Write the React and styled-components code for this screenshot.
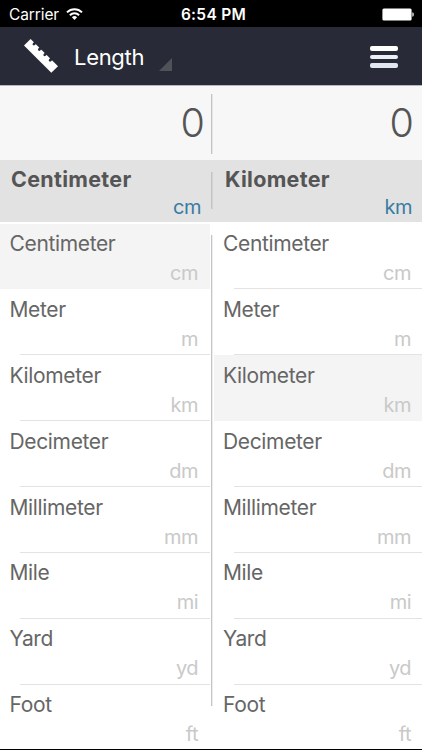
import React from 'react'
import styled, { createGlobalStyle } from 'styled-components'

const units = [
    { name: 'Centimeter', short: 'cm' },
    { name: 'Meter', short: 'm' },
    { name: 'Kilometer', short: 'km' },
    { name: 'Decimeter', short: 'dm' },
    { name: 'Millimeter', short: 'mm' },
    { name: 'Mile', short: 'mi' },
    { name: 'Yard', short: 'yd' },
    { name: 'Foot', short: 'ft' },
]

const UnitList = ({ selected }) => (
    <List>
        {units.map((unit, i) => (
            <Unit
                key={unit.name}
                $selected={unit.name === selected}
                $line={unit.name !== selected && i < units.length - 1}>
                <UnitName>{unit.name}</UnitName>
                <UnitShort>{unit.short}</UnitShort>
            </Unit>
        ))}
    </List>
)

const App = () => {
    return (
        <Screen>
            <GlobalStyle />
            <StatusBar>
                <Carrier>
                    <span>Carrier</span>
                    <svg width="17" height="12" viewBox="0 0 17 12" fill="none" stroke="#fff" strokeWidth="2">
                        <path d="M1 4.4a10.6 10.6 0 0 1 15 0" />
                        <path d="M3.9 7.2a6.5 6.5 0 0 1 9.2 0" />
                        <path d="M8.5 12 5.9 9.3a3.7 3.7 0 0 1 5.2 0Z" fill="#fff" stroke="none" />
                    </svg>
                </Carrier>
                <Clock>6:54 PM</Clock>
                <Battery>
                    <svg width="33" height="13" viewBox="0 0 33 13" fill="#fff">
                        <rect x="0.4" y="0.4" width="29.2" height="12.2" rx="1.5" />
                        <path d="M30.4 4.2c1.8.5 1.8 4.1 0 4.6Z" />
                    </svg>
                </Battery>
            </StatusBar>

            <NavBar>
                <Ruler width="36" height="36" viewBox="0 0 36 36">
                    <path d="M1 7.4 7.6.9 35 28.2l-6.7 6.6Z" fill="#fff" />
                    <path
                        d="m13 4-2.1 2.1M18.4 9.4l-2.1 2.1M23.8 14.8l-2.1 2.1M29.2 20.2l-2.1 2.1"
                        stroke="#282b37"
                        strokeWidth="2.7"
                        strokeLinecap="round" />
                </Ruler>
                <Title>Length</Title>
                <Corner width="13" height="13" viewBox="0 0 13 13">
                    <path d="M13 0v13H0Z" fill="#515257" />
                </Corner>
                <MenuButton type="button" aria-label="Menu">
                    <MenuLine $color="#fff" />
                    <MenuLine $color="#edeff7" />
                    <MenuLine $color="#e1e6f1" />
                </MenuButton>
            </NavBar>

            <Values>
                <Value>0</Value>
                <Divider $height={60} $top={8} />
                <Value $last>0</Value>
            </Values>

            <Current>
                <CurrentUnit>
                    <strong>Centimeter</strong>
                    <span>cm</span>
                </CurrentUnit>
                <Divider $height={37} $top={12} />
                <CurrentUnit $last>
                    <strong>Kilometer</strong>
                    <span>km</span>
                </CurrentUnit>
            </Current>

            <Lists>
                <UnitList selected="Centimeter" />
                <Divider $height={471} $top={12} />
                <UnitList selected="Kilometer" />
            </Lists>
        </Screen>
    )
}

const GlobalStyle = createGlobalStyle`
body{
    margin:0;
    background:#fff;
}
*{
    box-sizing:border-box;
}
`

const Screen = styled.div`
width:422px;
height:750px;
display:flex;
flex-direction:column;
overflow:hidden;
background:#fff;
border-bottom:1px solid #000;
font-family:Inter, 'Liberation Sans', sans-serif;
color:#666;
`

const StatusBar = styled.div`
height:27px;
flex:none;
display:grid;
grid-template-columns:1fr auto 1fr;
align-items:center;
padding:2px 7px 0 9px;
background:#000;
color:#fff;
font-size:15.5px;
line-height:24px;
`

const Carrier = styled.div`
display:flex;
align-items:center;
gap:7px;
letter-spacing:-0.1px;
svg{
    margin-top:-2px;
}
`

const Clock = styled.div`
margin-left:3px;
font-weight:600;
letter-spacing:0.3px;
`

const Battery = styled.div`
display:flex;
justify-content:flex-end;
`

const NavBar = styled.div`
height:59px;
flex:none;
display:flex;
align-items:center;
padding:0 24px 0 23px;
background:#282b37;
border-bottom:1px solid #b5b6c0;
color:#fff;
`

const Ruler = styled.svg`
flex:none;
`

const Title = styled.div`
margin:2px 0 0 15px;
width:71px;
font-size:22px;
line-height:28px;
letter-spacing:-0.3px;
`

const Corner = styled.svg`
margin:17px 0 0 14px;
`

const MenuButton = styled.button`
margin:2px 0 0 auto;
padding:0;
border:none;
background:none;
display:grid;
gap:4px;
width:28px;
`

const MenuLine = styled.span`
height:4.5px;
border-radius:2px;
background:${p => p.$color};
`

const Divider = styled.div`
width:1px;
flex:none;
margin:${p => p.$top}px 2px 0 1px;
height:${p => p.$height}px;
background:#c4c4c4;
box-shadow:1px 0 0 rgba(0, 0, 0, 0.07);
`

const Values = styled.div`
height:74px;
flex:none;
display:flex;
background:#f7f7f7;
`

const Value = styled.div`
flex:${p => (p.$last ? '1' : '0 0 210px')};
padding-right:${p => (p.$last ? 8 : 5)}px;
font-size:39.5px;
font-weight:300;
line-height:74px;
text-align:right;
color:#555;
`

const Current = styled.div`
height:62px;
flex:none;
display:flex;
background:#e2e2e2;
`

const CurrentUnit = styled.div`
display:flex;
flex-direction:column;
flex:${p => (p.$last ? '1' : '0 0 210px')};
padding:6px ${p => (p.$last ? 10 : 9)}px 0 11px;
strong{
    font-size:21.5px;
    line-height:26px;
    font-weight:700;
    letter-spacing:0.3px;
    color:#555;
}
span{
    align-self:flex-end;
    font-size:20px;
    line-height:30px;
    letter-spacing:-0.5px;
    color:#387ca3;
}
`

const Lists = styled.div`
height:527px;
flex:none;
display:flex;
padding-top:1px;
`

const List = styled.div`
flex:0 0 210px;
display:grid;
grid-template-rows:repeat(8, 65.9px);
margin-top:0.5px;
& + div + &{
    flex-basis:208px;
}
& + div + & > div{
    padding-left:9px;
    padding-right:11px;
}
`

const Unit = styled.div`
position:relative;
display:flex;
flex-direction:column;
padding:6.5px 12px 0 9.5px;
background:${p => (p.$selected ? '#f4f4f4' : 'transparent')};
&::after{
    content:'';
    display:${p => (p.$line ? 'block' : 'none')};
    position:absolute;
    left:20px;
    right:0;
    bottom:0;
    height:1px;
    background:#e3e3e3;
}
`

const UnitName = styled.div`
font-size:21px;
line-height:28px;
letter-spacing:-0.35px;
`

const UnitShort = styled.div`
align-self:flex-end;
font-size:20px;
line-height:30px;
letter-spacing:-0.5px;
color:#c9c9c9;
`

export default App
